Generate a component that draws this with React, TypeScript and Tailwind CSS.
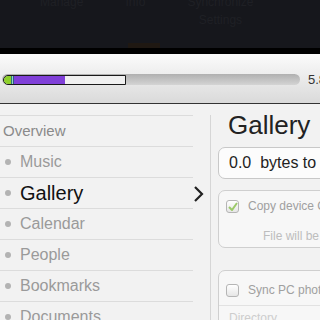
const items = ["Music", "Gallery", "Calendar", "People", "Bookmarks", "Documents"];

const Check = ({ checked }: { checked?: boolean }) => (
  <div className="w-[13px] h-[13px] rounded-[3px] border border-[#b5b5b5] bg-gradient-to-b from-white to-[#e6e6e6] flex items-center justify-center shrink-0">
    {checked && (
      <svg width="10" height="9" viewBox="0 0 10 9">
        <path d="M1 5 L4 8 L9 1" fill="none" stroke="#9cc96a" strokeWidth="2" />
      </svg>
    )}
  </div>
);

const App = () => {
  return (
    <div className="w-[320px] h-[320px] overflow-hidden bg-[#f2f2f2] font-['Liberation_Sans',Arial,sans-serif]">
      <div className="h-[48px] bg-[#16171c] relative overflow-hidden">
        <div className="flex text-[12px] text-[#1f2025] -mt-[5px] leading-[14px]">
          <span className="ml-[40px]">Manage</span>
          <span className="ml-[42px]">Info</span>
          <div className="ml-[42px] flex flex-col items-center">
            <span>Synchronize</span>
            <span className="mt-[4px]">Settings</span>
          </div>
        </div>
        <div className="absolute left-[128px] bottom-0 w-[32px] h-[5px] bg-[#1f1812]" />
      </div>
      <div className="h-[6px] bg-black" />
      <div className="h-[50px] bg-gradient-to-b from-[#fbfbfb] to-[#dadada] border-b border-[#333] flex items-center pt-[2px]">
        <div className="ml-[2px] shrink-0 w-[298px] h-[11px] rounded-full bg-gradient-to-b from-[#b0b0b0] to-[#d4d4d4] flex items-center">
          <div className="ml-[1px] h-[10px] w-[123px] border border-[#1a1a1a] rounded-l-full flex overflow-hidden">
            <div className="w-[7px] bg-[#8ed02a] rounded-l-full" />
            <div className="w-[1px] bg-[#2a7a7a]" />
            <div className="w-[1px] bg-[#9ad0c0]" />
            <div className="w-[1px] bg-[#2a5a8a]" />
            <div className="w-[51px] bg-[#8040d8]" />
            <div className="flex-1 bg-[#f0f0f0]" />
          </div>
        </div>
        <span className="ml-[8px] shrink-0 text-[13px] text-[#333]">5.8 GB</span>
      </div>
      <div className="flex">
        <div className="w-[211px] shrink-0 border-r border-[#d6d6d6] mt-[11px] h-[212px]">
          <div className="w-[193px] border-t border-[#dcdcdc] h-[31px] flex items-center pl-[3px] text-[15px] text-[#8a8a8a]">
            Overview
          </div>
          {items.map((it) => {
            const active = it === "Gallery";
            return (
              <div
                key={it}
                className="w-[193px] border-t border-[#dcdcdc] h-[31px] flex items-center relative"
              >
                <div className="ml-[5px] w-[6px] h-[6px] rounded-full bg-[#b3b3b3]" />
                <span
                  className={
                    active
                      ? "ml-[9px] text-[20px] text-[#111]"
                      : "ml-[9px] text-[16px] text-[#9a9a9a]"
                  }
                >
                  {it}
                </span>
                {active && (
                  <svg className="absolute right-[-12px] top-[8px]" width="12" height="16" viewBox="0 0 12 16">
                    <path d="M2 1 L9 8 L2 15" fill="none" stroke="#222" strokeWidth="2.2" />
                  </svg>
                )}
              </div>
            );
          })}
        </div>
        <div className="flex-1 pl-[7px] flex flex-col whitespace-nowrap">
          <div className="text-[26px] text-[#222] leading-[30px] mt-[6px] ml-[10px]">Gallery</div>
          <div className="mt-[7px] h-[32px] w-[140px] rounded-[7px] border border-[#c8c8c8] bg-[#fcfcfc] flex items-center pl-[10px] text-[16px] text-[#222]">
            0.0&nbsp; bytes to be synced
          </div>
          <div className="mt-[11px] h-[58px] w-[140px] rounded-[7px] border border-[#cfcfcf] bg-[#f7f7f7] flex flex-col pl-[7px] pt-[6px]">
            <div className="flex items-center gap-[9px] text-[12px] text-[#a0a0a0]">
              <Check checked />
              <span>Copy device Gallery</span>
            </div>
            <div className="ml-[37px] mt-[12px] text-[12px] text-[#bdbdbd]">File will be copied</div>
          </div>
          <div className="mt-[22px] h-[60px] w-[140px] rounded-t-[7px] border border-[#cfcfcf] bg-[#f7f7f7] flex flex-col">
            <div className="flex items-center gap-[9px] text-[12px] text-[#a0a0a0] pl-[7px] pt-[10px] pb-[6px] border-b border-[#e2e2e2]">
              <Check />
              <span>Sync PC photos</span>
            </div>
            <div className="pl-[10px] pt-[3px] text-[12px] text-[#cdcdcd]">Directory</div>
          </div>
        </div>
      </div>
    </div>
  );
};

export default App;
